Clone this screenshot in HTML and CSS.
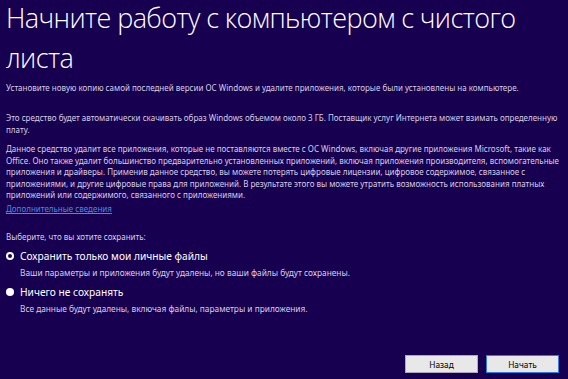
FILE: index.html
```html
<!DOCTYPE html>
<html lang="ru">
<head>
<meta charset="utf-8">
<link rel="stylesheet" href="styles.css">
</head>
<body>
<div class="page">
  <h1 class="title">Начните работу с компьютером с чистого листа</h1>
  <p class="text p1">Установите новую копию самой последней версии ОС Windows и удалите приложения, которые были установлены на компьютере.</p>
  <p class="text p2">Это средство будет автоматически скачивать образ Windows объемом около 3 ГБ. Поставщик услуг Интернета может взимать определенную плату.</p>
  <p class="text p3">Данное средство удалит все приложения, которые не поставляются вместе с ОС Windows, включая другие приложения Microsoft, такие как Office. Оно также удалит большинство предварительно установленных приложений, включая приложения производителя, вспомогательные приложения и драйверы. Применив данное средство, вы можете потерять цифровые лицензии, цифровое содержимое, связанное с приложениями, и другие цифровые права для приложений. В результате этого вы можете утратить возможность использования платных приложений или содержимого, связанного с приложениями.</p>
  <a class="link" href="#">Дополнительные сведения</a>
  <p class="text prompt">Выберите, что вы хотите сохранить:</p>
  <div class="option opt1">
    <div class="option-row"><span class="radio checked"></span><span class="option-label">Сохранить только мои личные файлы</span></div>
    <div class="option-desc">Ваши параметры и приложения будут удалены, но ваши файлы будут сохранены.</div>
  </div>
  <div class="option opt2">
    <div class="option-row"><span class="radio"></span><span class="option-label">Ничего не сохранять</span></div>
    <div class="option-desc">Все данные будут удалены, включая файлы, параметры и приложения.</div>
  </div>
  <div class="buttons">
    <button class="btn">Назад</button>
    <button class="btn primary">Начать</button>
  </div>
</div>
</body>
</html>
```
FILE: styles.css
```css
html, body {
  margin: 0;
  padding: 0;
  background: #180050;
  height: 100%;
}
body {
  font-family: "Noto Sans", sans-serif;
  color: #d6cfe6;
}
.page {
  height: 379px;
  box-sizing: border-box;
  padding: 0 3px 0 6px;
  display: flex;
  flex-direction: column;
}
.title {
  margin: -2px 0 0 0;
  font-family: "Open Sans", sans-serif;
  font-weight: 300;
  font-size: 27px;
  letter-spacing: -0.6px;
  line-height: 40px;
  color: #ffffff;
  width: 530px;
}
.text {
  margin: 0;
  font-size: 8px;
  line-height: 11.5px;
}
.p1 { margin-top: 4px; }
.p2 { margin-top: 18.5px; }
.p3 { margin-top: 8px; }
.link {
  margin-top: 2.5px;
  font-size: 8px;
  line-height: 11px;
  color: #3f8fe0;
  align-self: flex-start;
}
.prompt { margin-top: 16.5px; }
.opt1 { margin-top: 5.5px; }
.opt2 { margin-top: 5.5px; }
.option-row {
  display: flex;
  align-items: center;
  gap: 6px;
}
.radio {
  width: 8px;
  height: 8px;
  border-radius: 50%;
  background: #ffffff;
  box-sizing: border-box;
}
.radio.checked {
  border: 2.5px solid #ffffff;
  background: #180050;
}
.option-label {
  font-size: 10.2px;
  line-height: 16px;
  color: #ffffff;
}
.option-desc {
  padding-left: 14px;
  margin-top: 3px;
  font-size: 8.3px;
  line-height: 12px;
  color: #d6cfe6;
}
.buttons {
  margin-top: auto;
  margin-bottom: 6px;
  padding-right: 6px;
  display: flex;
  justify-content: flex-end;
  gap: 8px;
}
.btn {
  width: 73px;
  height: 18px;
  padding: 0;
  font-family: "Noto Sans", sans-serif;
  font-size: 8.3px;
  color: #000;
  background: #e8e8e8;
  border: 1px solid #b0a9bb;
}
.btn.primary {
  border-color: #2e7de0;
}
```
